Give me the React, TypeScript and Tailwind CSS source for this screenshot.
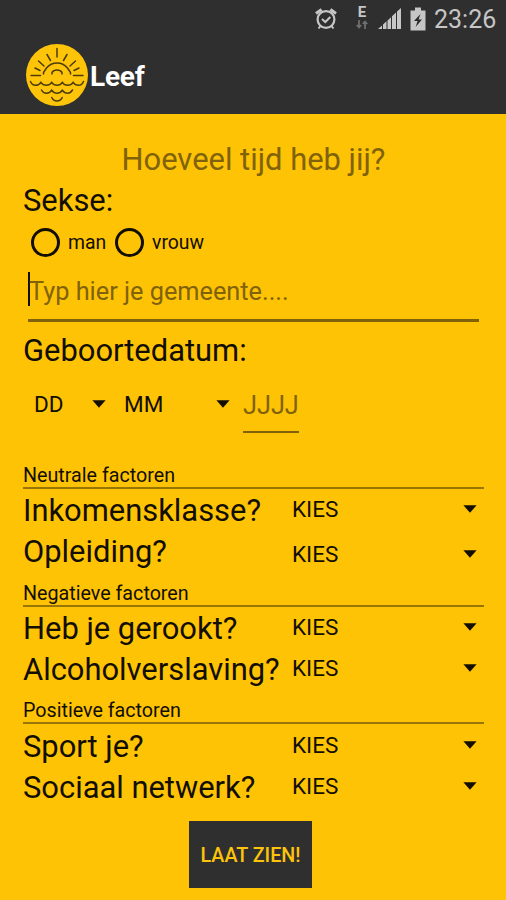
import React, { useState } from 'react';

interface Factor {
  label: string;
  row: string;
  labelOffset: string;
  spinnerOffset: string;
}

interface FactorGroup {
  title: string;
  className: string;
  factors: Factor[];
}

const groups: FactorGroup[] = [
  {
    title: 'Neutrale factoren',
    className: 'h-[118px]',
    factors: [
      { label: 'Inkomensklasse?', row: 'h-[42px]', labelOffset: 'pt-[2px]', spinnerOffset: 'pt-0' },
      { label: 'Opleiding?', row: 'h-[40px]', labelOffset: 'pt-[1px]', spinnerOffset: 'pt-[3px]' },
    ],
  },
  {
    title: 'Negatieve factoren',
    className: 'h-[117px]',
    factors: [
      { label: 'Heb je gerookt?', row: 'h-[41px]', labelOffset: 'pt-[2px]', spinnerOffset: 'pt-0' },
      { label: 'Alcoholverslaving?', row: 'h-[40px]', labelOffset: 'pt-[2px]', spinnerOffset: 'pt-0' },
    ],
  },
  {
    title: 'Positieve factoren',
    className: 'h-[117px]',
    factors: [
      { label: 'Sport je?', row: 'h-[41px]', labelOffset: 'pt-[3px]', spinnerOffset: 'pt-[1px]' },
      { label: 'Sociaal netwerk?', row: 'h-[40px]', labelOffset: 'pt-[3px]', spinnerOffset: 'pt-[1px]' },
    ],
  },
];

const Caret: React.FC = () => (
  <svg width="14" height="10" viewBox="0 0 14 10" className="shrink-0">
    <path d="M0.400 0.300h13.200L7 7.800z" fill="#120e00" />
  </svg>
);

const Logo: React.FC = () => (
  <svg width="64" height="64" viewBox="0 0 64 64" fill="none" stroke="#4c3c08" strokeWidth="1.500" strokeLinecap="round">
    <circle cx="32" cy="32" r="31" fill="#fdc40a" stroke="none" />
    <path d="M18.500 31v-1.500l3-4.500a13.500 13.500 0 0 1 21 0l3 4.500V31" />
    <path d="M27 31v-1.500q1.500-2.500 5-2.500t5 2.500V31" />
    <path d="M32 5.500v8.500M22 11.500l3.500 6M42 11.500l-3.500 6M13.500 18l5.500 5M50.500 18l-5.500 5M10 25l5 2.500M54 25l-5 2.500M6 32.500h9.500M48.500 32.500h9.500" />
    <path d="M5.500 38.500q1.500 3.800 5 3.800t5.400-3q2 3 5.400 3t5.400-3q2 3 5.300 3t5.300-3q2 3 5.400 3t5.400-3q2 3 5.400 3t5-3.800" />
    <path d="M16.500 47q1.500 3.200 5 3.200t5.200-3q2.200 3 5.300 3t5.300-3q2.200 3 5.200 3t5-3.200" />
    <path d="M26.800 54.500q1.600 3.500 5.200 3.500t5.200-3.500" />
  </svg>
);

const StatusBar: React.FC = () => (
  <div className="flex h-[37px] items-center text-[#c6c6c6]">
    <svg width="24" height="24" viewBox="0 0 24 24" className="ml-[314px]" fill="none" stroke="currentColor">
      <circle cx="12" cy="12.500" r="8.400" strokeWidth="2.200" />
      <path d="M2 6.500L7.600 2.500M22 6.500L16.400 2.500" strokeWidth="3" />
      <path d="M6.500 19l-2 2.500M17.500 19l2 2.500" strokeWidth="2" />
      <path d="M8 12l3.300 3 5-5" strokeWidth="2" />
    </svg>
    <div className="mb-[3px] ml-[17px] flex w-[14px] flex-col items-center">
      <span className="text-[15px] leading-[15px] font-bold">E</span>
      <svg width="12" height="9" viewBox="0 0 12 9" fill="none" stroke="#6f6f6f" strokeWidth="1.800">
        <path d="M3 0v7M0.800 5L3 7.500 5.200 5M9 9V2M6.800 4L9 1.500 11.200 4" />
      </svg>
    </div>
    <svg width="24" height="23" viewBox="0 0 24 23" className="ml-[9px]" fill="currentColor">
      <path d="M0 22l4-3.500V22zM5 22v-4.500l3.500-3.200V22zM9.500 22v-8.500l3.500-3.300V22zM14 22V9.200l4-3.800V22zM19 22V4.500L23 1v21z" />
    </svg>
    <svg width="16" height="24" viewBox="0 0 16 24" className="ml-[8px]">
      <path d="M5 0.500h6V3.500h4.500v20H0.500v-20H5z" fill="currentColor" />
      <path d="M10.500 7L4 14h3.600l-2 6L12 12.500H8.500z" fill="#2a2a2a" />
    </svg>
    <span className="ml-[8px] pt-[2px] text-[25px] leading-[30px] whitespace-nowrap">23:26</span>
  </div>
);

const App: React.FC = () => {
  const [gender, setGender] = useState<'man' | 'vrouw' | null>(null);

  return (
    <div className="h-[900px] w-[506px] overflow-hidden bg-[#ffc305] font-['Roboto',sans-serif] text-[#120e00]">
      <header className="h-[114px] bg-[#2f2f2f]">
        <StatusBar />
        <div className="flex h-[76px] items-center pl-[25px]">
          <Logo />
          <h1 className="pt-[3px] pl-[1px] text-[28px] leading-[34px] font-bold tracking-[-0.200px] text-white">Leef</h1>
        </div>
      </header>

      <main className="pr-[22px] pl-[23px]">
        <h2 className="h-[66px] pt-[25px] text-center text-[30.900px] leading-[41px] text-[#80620a]">Hoeveel tijd heb jij?</h2>
        <div className="h-[42px] text-[30.900px] leading-[41px]">Sekse:</div>

        <div className="flex h-[40px] items-center pl-[8px]">
          {(['man', 'vrouw'] as const).map((option) => (
            <button key={option} onClick={() => setGender(option)} className="flex w-[84px] items-center text-[19.400px] leading-6">
              <span className="flex h-[29px] w-[29px] shrink-0 items-center justify-center rounded-full border-[3px] border-[#120e00]">
                {gender === option && <span className="h-3 w-3 rounded-full bg-[#120e00]" />}
              </span>
              <span className="pt-[2px] pl-[8px]">{option}</span>
            </button>
          ))}
        </div>

        <div className="mr-[5px] ml-[5px] flex h-[60px] border-b-[3px] border-[#80620a] pt-[10px]">
          <span className="h-[34px] w-[2px] bg-[#120e00]" />
          <span className="-ml-px pt-[2px] text-[25.300px] leading-[36px] text-[#80620a]">Typ hier je gemeente....</span>
        </div>

        <div className="h-[58px] pt-[8px] text-[30.900px] leading-[41px]">Geboortedatum:</div>
        <div className="flex h-[53px] pl-[11px] text-[22.500px]">
          <div className="flex h-[49px] w-[90px] items-center">
            <span className="w-[58px]">DD</span>
            <Caret />
          </div>
          <div className="flex h-[49px] w-[119px] items-center">
            <span className="w-[92px]">MM</span>
            <Caret />
          </div>
          <div className="h-[53px] w-[56px] border-b-2 border-[#80620a] pt-[8px] text-[25.300px] leading-[36px] text-[#80620a]">JJJJ</div>
        </div>

        <div className="pt-[30px]">
          {groups.map((group) => (
            <section key={group.title} className={group.className}>
              <h3 className="h-[26px] border-b-2 border-[#987507] pt-px text-[19.700px] leading-[24px]">{group.title}</h3>
              {group.factors.map((factor) => (
                <div key={factor.label} className={`flex ${factor.row}`}>
                  <div className={`w-[269px] text-[30.900px] leading-[40px] whitespace-nowrap ${factor.labelOffset}`}>{factor.label}</div>
                  <div className={`flex flex-1 pr-[7px] text-[22.500px] ${factor.spinnerOffset}`}>
                    <div className="flex h-[42px] flex-1 items-center justify-between">
                      <span>KIES</span>
                      <Caret />
                    </div>
                  </div>
                </div>
              ))}
            </section>
          ))}
        </div>

        <button className="mt-[6px] ml-[166px] block h-[67px] w-[123px] bg-[#2f2f2f] pt-[2px] text-[19.700px] font-medium text-[#fdc40a]">LAAT ZIEN!</button>
      </main>
    </div>
  );
};

export default App;
